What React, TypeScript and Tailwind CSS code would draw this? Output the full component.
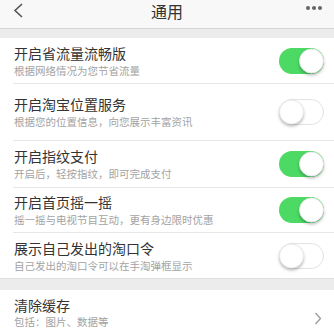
import { useState } from 'react';

interface ToggleRowProps {
  title: string;
  desc: string;
  on: boolean;
  height: string;
  last?: boolean;
  onToggle: () => void;
}

function Toggle({ on, onClick }: { on: boolean; onClick: () => void }) {
  return (
    <button
      onClick={onClick}
      className={`relative w-[45px] h-[26px] rounded-full shrink-0 ${
        on ? 'bg-[#4cd964]' : 'bg-white border border-[#e3e3e3]'
      }`}
    >
      <span
        className={`absolute top-1/2 -translate-y-1/2 w-[25px] h-[25px] rounded-full bg-white shadow-[0_2px_3px_rgba(0,0,0,0.25)] border border-[#e8e8e8] ${
          on ? 'right-0' : '-left-[1px]'
        }`}
      />
    </button>
  );
}

function ToggleRow({ title, desc, on, height, last, onToggle }: ToggleRowProps) {
  return (
    <div className="pl-[13px] bg-white">
      <div className={`flex items-center pr-[10px] ${height} ${last ? '' : 'border-b border-[#e6e6e6]'}`}>
        <div className="flex-1 pl-px">
          <div className="text-[14px] leading-[18px] text-[#333]">{title}</div>
          <div className="text-[10.5px] leading-[14px] mt-[2px] text-[#a3a3a3]">{desc}</div>
        </div>
        <Toggle on={on} onClick={onToggle} />
      </div>
    </div>
  );
}

export default function App() {
  const [toggles, setToggles] = useState([true, false, true, true, false]);
  const flip = (i: number) => setToggles(t => t.map((v, j) => (j === i ? !v : v)));

  const rows = [
    { title: '开启省流量流畅版', desc: '根据网络情况为您节省流量', height: 'h-[46px]' },
    { title: '开启淘宝位置服务', desc: '根据您的位置信息，向您展示丰富资讯', height: 'h-[57px]' },
    { title: '开启指纹支付', desc: '开启后，轻按指纹，即可完成支付', height: 'h-[47px]' },
    { title: '开启首页摇一摇', desc: '摇一摇与电视节目互动，更有身边限时优惠', height: 'h-[45px]' },
    { title: '展示自己发出的淘口令', desc: '自己发出的淘口令可以在手淘弹框显示', height: 'h-[45px]' },
  ];

  return (
    <div
      className="w-[334px] h-[328px] overflow-hidden bg-[#ececec]"
      style={{ fontFamily: '"Noto Sans CJK SC", "Noto Sans", sans-serif' }}
    >
      {/* header */}
      <div className="h-[29px] bg-[#f8f8f8] border-b border-[#d6d6d6] flex items-start">
        <div className="w-[60px] pl-[13px] pt-[3px]">
          <svg width="11" height="15" viewBox="0 0 11 15" fill="none">
            <polyline points="9,1 2,7.5 9,14" stroke="#555" strokeWidth="1.6" />
          </svg>
        </div>
        <div className="flex-1 text-center text-[16px] leading-[20px] pt-px text-[#333]">通用</div>
        <div className="w-[60px] flex justify-end gap-[2px] pr-[12px] pt-[6px]">
          <span className="w-[4px] h-[4px] rounded-full bg-[#666]" />
          <span className="w-[4px] h-[4px] rounded-full bg-[#666]" />
          <span className="w-[4px] h-[4px] rounded-full bg-[#666]" />
        </div>
      </div>

      <div className="h-[9px]" />

      <div>
        {rows.map((r, i) => (
          <ToggleRow
            key={r.title}
            title={r.title}
            desc={r.desc}
            height={r.height}
            on={toggles[i]}
            last={i === rows.length - 1}
            onToggle={() => flip(i)}
          />
        ))}
      </div>

      <div className="h-[12px] border-t border-[#e0e0e0]" />

      <div className="bg-white pl-[14px] pr-[12px] pt-[6px] h-[60px] flex items-start">
        <div className="flex-1">
          <div className="text-[14px] leading-[18px] text-[#333]">清除缓存</div>
          <div className="text-[10.5px] leading-[14px] mt-[1px] text-[#a3a3a3]">包括：图片、数据等</div>
        </div>
        <svg width="8" height="13" viewBox="0 0 8 13" fill="none" className="mt-[16px]">
          <polyline points="1.5,1 6.5,6.5 1.5,12" stroke="#999" strokeWidth="1.3" />
        </svg>
      </div>
    </div>
  );
}
